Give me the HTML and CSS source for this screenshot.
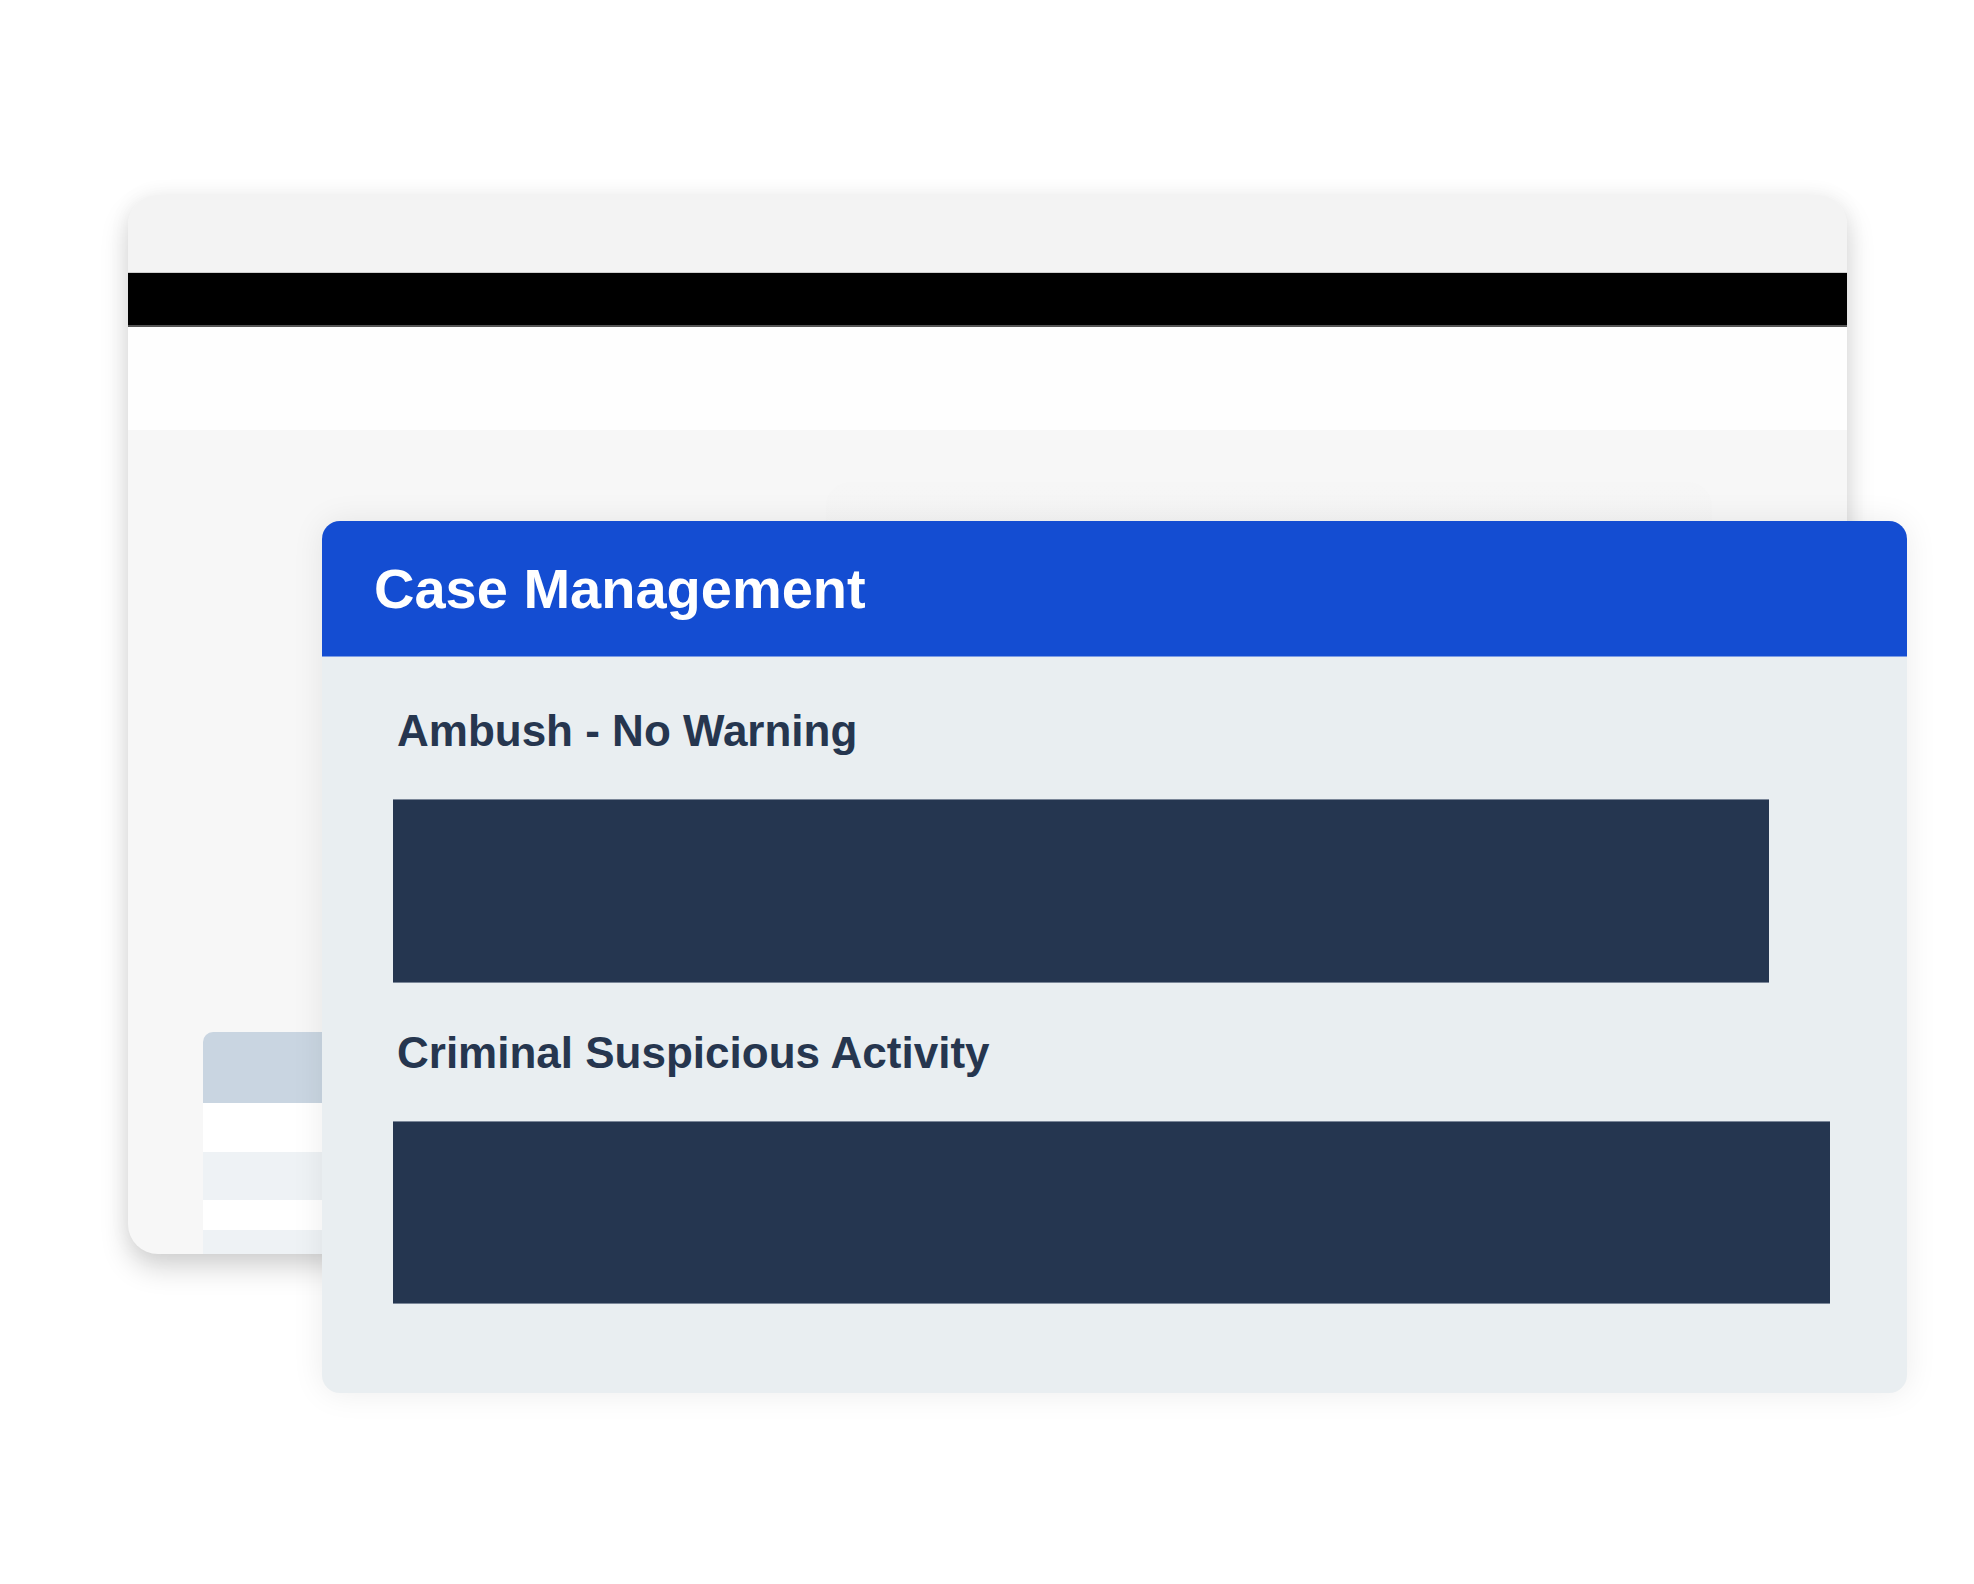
FILE: index.html
```html
<!DOCTYPE html>
<html lang="en">
<head>
  <meta charset="UTF-8">
  <meta name="viewport" content="width=device-width, initial-scale=1.0">
  <title>Case Management</title>
  <link rel="stylesheet" href="styles.css">
</head>
<body>
  <div class="stage">
    <!-- window in the background -->
    <div class="window">
      <div class="window-top"></div>
      <div class="window-bar"></div>
      <div class="window-strip"></div>
      <div class="window-body">
        <div class="panel"></div>
        <div class="table">
          <div class="table-head"></div>
          <div class="table-row"></div>
          <div class="table-row alt"></div>
          <div class="table-row short"></div>
          <div class="table-row alt"></div>
        </div>
      </div>
    </div>

    <!-- card on top -->
    <div class="card">
      <div class="card-header">
        <h1>Case Management</h1>
      </div>
      <div class="card-body">
        <h2 class="label">Ambush - No Warning</h2>
        <div class="block first"></div>
        <h2 class="label second">Criminal Suspicious Activity</h2>
        <div class="block wide"></div>
      </div>
    </div>
  </div>
</body>
</html>
```

FILE: styles.css
```css
body {
  margin: 0;
  background: #ffffff;
  font-family: "Liberation Sans", Arial, sans-serif;
}
.stage {
  position: relative;
  width: 1974px;
  height: 1584px;
  padding: 195px 0 0 128px;
  box-sizing: border-box;
}

/* background window */
.window {
  width: 1719px;
  height: 1059px;
  border-radius: 30px;
  overflow: hidden;
  background: #f7f7f7;
  box-shadow: 0 14px 28px rgba(0, 0, 0, 0.17), 0 0 22px rgba(0, 0, 0, 0.05);
}
.window-top {
  height: 77px;
  background: #f3f3f3;
  border-bottom: 1px solid #cfcfcf;
}
.window-bar {
  height: 52px;
  background: #000000;
  border-bottom: 2px solid #555555;
}
.window-strip {
  height: 103px;
  background: #fefefe;
}
.window-body {
  position: relative;
  padding: 602px 0 0 75px;
}
.panel {
  position: absolute;
  left: 698px;
  top: 52px;
  width: 886px;
  height: 400px;
  border-radius: 24px 24px 0 0;
  background: linear-gradient(#f6f6f6, #f1f1f1);
}
.table {
  width: 400px;
}
.table-head {
  height: 71px;
  background: #c9d5e1;
  border-top-left-radius: 10px;
}
.table-row {
  height: 49px;
  background: #ffffff;
}
.table-row.alt {
  height: 48px;
  background: #eef2f5;
}
.table-row.short {
  height: 30px;
}

/* front card */
.card {
  position: absolute;
  left: 322px;
  top: 521px;
  width: 1585px;
  height: 872px;
  border-radius: 18px;
  overflow: hidden;
  background: #e9eef1;
  box-shadow: 0 0 32px rgba(0, 0, 0, 0.08);
}
.card-header {
  height: 135px;
  background: #144dd2;
  border-bottom: 1px solid #7c9ce4;
  display: flex;
  align-items: center;
  padding-left: 52px;
}
.card-header h1 {
  margin: 0;
  color: #ffffff;
  font-size: 56px;
  font-weight: bold;
  line-height: 64px;
}
.card-body {
  padding: 48px 0 0 71px;
}
.label {
  margin: 0 0 0 4px;
  color: #26364f;
  font-size: 44px;
  font-weight: bold;
  line-height: 52px;
}
.label.second {
  margin-top: 44px;
}
.block {
  margin-top: 42px;
  height: 182px;
  background: #253650;
  border-top: 1px solid #7a8698;
  border-bottom: 1px solid #7a8698;
}
.block.first {
  width: 1376px;
}
.block.wide {
  width: 1437px;
  height: 181px;
}
```
